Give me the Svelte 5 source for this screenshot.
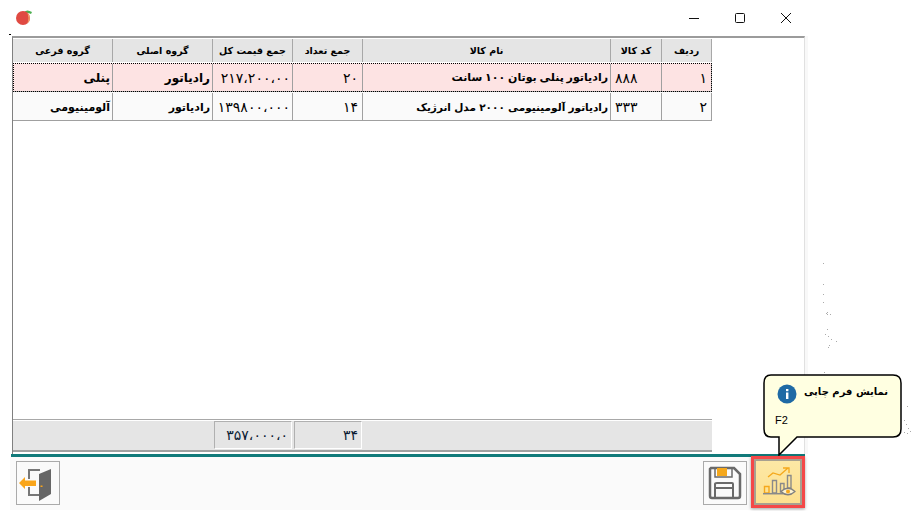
<script>
	const rows = [
		{ no: '۱', code: '۸۸۸', name: 'رادیاتور پنلی بوتان ۱۰۰ سانت', qty: '۲۰', total: '۲۱۷،۲۰۰،۰۰', main: 'رادیاتور', sub: 'پنلی', active: true },
		{ no: '۲', code: '۳۳۳', name: 'رادیاتور آلومینیومی ۲۰۰۰ مدل انرژیک', qty: '۱۴', total: '۱۳۹۸۰۰،۰۰۰', main: 'رادیاتور', sub: 'آلومینیومی', active: false }
	];
	const specks = [
		[823, 263], [823, 284], [823, 294], [823, 302], [826, 313], [827, 312], [827, 314], [830, 314],
		[827, 329], [825, 334], [828, 336], [831, 339], [836, 341], [829, 345], [828, 347], [824, 372],
		[907, 406], [904, 420], [906, 424], [908, 428], [904, 432], [907, 433], [910, 431]
	];
</script>

<div class="window">
	<div class="titlebar">
		<svg class="app-icon" width="16" height="16" viewBox="0 0 16 16">
			<path d="M8 3 Q11 0 16 3 L15 5 Q11 3 9 5 Z" fill="#4caf50" />
			<circle cx="7" cy="9" r="7" fill="#e04a42" />
			<path d="M11 3.5 A7 7 0 0 1 11 14.7 Q14 9 11 3.5 Z" fill="#f4a868" />
		</svg>
		<div class="win-btns">
			<svg width="12" height="12" viewBox="0 0 12 12"><path d="M1 6.5 H11" stroke="#111" fill="none" /></svg>
			<svg width="12" height="12" viewBox="0 0 12 12"><rect x="1.5" y="1.5" width="9" height="9" rx="1" stroke="#111" fill="none" /></svg>
			<svg width="12" height="12" viewBox="0 0 12 12"><path d="M1 1 L11 11 M11 1 L1 11" stroke="#111" fill="none" /></svg>
		</div>
	</div>

	<div class="frame">
		<div class="grid head">
			<div>گروه فرعی</div>
			<div>گروه اصلی</div>
			<div>جمع قیمت کل</div>
			<div>جمع تعداد</div>
			<div>نام کالا</div>
			<div>کد کالا</div>
			<div>ردیف</div>
		</div>
		{#each rows as row}
			<div class="grid row" class:active={row.active}>
				<div>{row.sub}</div>
				<div>{row.main}</div>
				<div class="num total">{row.total}</div>
				<div class="num qty">{row.qty}</div>
				<div class="name">{row.name}</div>
				<div class="num code">{row.code}</div>
				<div class="num idx">{row.no}</div>
			</div>
		{/each}
		<div class="spacer"></div>
		<div class="totals">
			<div class="sum first">۳۵۷،۰۰۰،۰</div>
			<div class="sum second">۳۴</div>
		</div>
	</div>

	<div class="teal"></div>

	<div class="toolbar">
		<button class="tool" aria-label="exit">
			<svg width="42" height="42" viewBox="0 0 42 42">
				<path d="M23 8 H12 V17 M12 25 V33 H22" stroke="#777" stroke-width="2" fill="none" />
				<path d="M34 7 L22 12 V39 L34 32 Z" fill="#666" />
				<path d="M19 18.5 H8 V15 L2 21 L8 27 V24 H19 Z" fill="#f9a51a" />
				<rect x="23.5" y="23.5" width="2" height="1.5" fill="#f9a51a" />
			</svg>
		</button>
		<div class="right-tools">
			<button class="tool" aria-label="save">
				<svg width="36" height="36" viewBox="0 0 36 36">
					<path d="M4 3 H27 L33 9 V31 Q33 33 31 33 H5 Q3 33 3 31 V4 Z" stroke="#6a6a6a" stroke-width="2.5" fill="none" />
					<rect x="10" y="3" width="10" height="8" fill="#f5a81c" />
					<path d="M8 3 V12 H25 V3" stroke="#6a6a6a" stroke-width="1.5" fill="none" />
					<path d="M8 32 V19 Q8 18 10 18 H25 Q26 18 26 19 V32 M8 23 H26" stroke="#6a6a6a" stroke-width="2" fill="none" />
				</svg>
			</button>
			<button class="tool hot" aria-label="print form">
				<svg width="36" height="36" viewBox="0 0 36 36">
					<path d="M8 13 L13 9 L20 11 L28 4 M23 4 H29 V9" stroke="#f5a81c" stroke-width="1.3" fill="none" />
					<path d="M4.5 22.5 H9 V29 H4.5 Z" stroke="#f5a81c" stroke-width="1.4" fill="none" />
					<path d="M12.5 16.5 H16.5 V29 H12.5 Z M20.5 19.5 H24 V28 H20.5 Z M27.5 11.5 H31 V24 H27.5 Z" stroke="#8a8a8a" stroke-width="1.4" fill="none" />
					<path d="M3 29.7 H25" stroke="#8a8a8a" stroke-width="1.5" />
					<path d="M21 27.5 Q28 21 35 27.5 Q28 34 21 27.5 Z" fill="#fdf3d0" stroke="#808080" stroke-width="1.2" />
					<circle cx="28" cy="27.5" r="2" fill="#f5a81c" />
				</svg>
			</button>
		</div>
	</div>

	<svg class="specks" width="911" height="511" viewBox="0 0 911 511">
		{#each specks as [x, y]}
			<rect {x} {y} width="1" height="1" fill="#aaa" />
		{/each}
	</svg>

	<div class="dot"></div>

	<div class="tip">
		<svg class="bubble" width="140" height="82" viewBox="0 0 140 82">
			<path
				d="M8 1 H130 Q138 1 138 9 V55 Q138 63 130 63 H34 L16 81 V63 H8 Q1 63 1 55 V9 Q1 1 8 1 Z"
				fill="#ffffe1"
				stroke="#000"
				stroke-width="1.5"
			/>
		</svg>
		<div class="tip-title">نمایش فرم چاپی</div>
		<svg class="info" width="20" height="20" viewBox="0 0 20 20">
			<circle cx="10" cy="10" r="9.5" fill="#1f6aa5" />
			<rect x="9" y="8.5" width="2.4" height="6.5" fill="#fff" />
			<rect x="9" y="5" width="2.4" height="2.2" fill="#fff" />
		</svg>
		<div class="tip-key">F2</div>
	</div>
</div>

<style>
	:global(body) {
		margin: 0;
		background: #fff;
	}

	.window {
		position: relative;
		width: 911px;
		height: 511px;
		overflow: hidden;
		display: flex;
		flex-direction: column;
		background: #fff;
		font-family: 'DejaVu Sans', 'Liberation Sans', sans-serif;
		color: #000;
	}

	.titlebar {
		height: 36px;
		flex: none;
		display: flex;
		align-items: flex-start;
		justify-content: space-between;
		padding: 9px 119px 0 16px;
		box-sizing: border-box;
	}

	.app-icon {
		display: block;
	}

	.win-btns {
		display: flex;
		gap: 34px;
		margin-top: 3px;
	}

	.frame {
		flex: none;
		width: 793px;
		height: 417.5px;
		margin-left: 12px;
		box-sizing: border-box;
		border-top: 2px solid #9b9b9b;
		border-left: 1px solid #808080;
		border-right: 1px solid #e0e0e0;
		box-shadow: 3px 0 0 #f8f8f8;
		display: flex;
		flex-direction: column;
	}

	.grid {
		width: 699px;
		display: grid;
		grid-template-columns: 100px 100px 80px 70px 248px 51px 50px;
		direction: ltr;
		box-sizing: border-box;
	}

	.grid > div {
		direction: rtl;
		box-sizing: border-box;
		overflow: hidden;
		white-space: nowrap;
	}

	.head {
		height: 25px;
		background: #e5e5e5;
		border-top: 1px solid #fff;
		border-bottom: 1px solid #fff;
	}

	.head > div {
		border-right: 1px solid #a8a8a8;
		display: flex;
		align-items: center;
		justify-content: center;
		font-size: 9.5px;
		font-weight: 700;
	}

	.row {
		height: 29px;
		padding-top: 1px;
		background: #fafafa;
		border-bottom: 1px solid #a0a0a0;
	}

	.row > div {
		border-right: 1px solid #a0a0a0;
		display: flex;
		align-items: center;
		justify-content: flex-start;
		padding-right: 2px;
		font-size: 11px;
		font-weight: 700;
	}

	.row:not(.active) > div {
		padding-top: 1px;
	}

	.row.active {
		background: #fde3e3;
		outline: 1px dotted #000;
		outline-offset: -1px;
	}

	.row.active > div {
		font-size: 12px;
	}

	.row .name {
		font-size: 10.5px;
		word-spacing: -0.4px;
	}

	.row.active .name {
		font-size: 11px;
		word-spacing: -1px;
	}

	.row .num {
		font-weight: 400;
		font-size: 14px;
	}

	.row.active .num {
		font-size: 14px;
	}

	.row .total {
		letter-spacing: 0.3px;
	}

	.row.active .total {
		letter-spacing: 1px;
	}

	.row .qty {
		padding-right: 4px;
		letter-spacing: 1px;
	}

	.row .code {
		padding-right: 0;
		padding-left: 4px;
		justify-content: flex-end;
		letter-spacing: 1px;
	}

	.row .idx {
		padding-right: 4px;
	}

	.spacer {
		flex: 1;
	}

	.totals {
		width: 699px;
		height: 33px;
		flex: none;
		margin-bottom: 1.5px;
		box-sizing: border-box;
		background: #e5e5e5;
		border-top: 1px solid #a8a8a8;
		border-bottom: 2px solid #a0a0a0;
		box-shadow: inset 0 1px 0 #fff;
		display: flex;
		padding: 1px 0 1px 201px;
		gap: 2px;
	}

	.sum {
		box-sizing: border-box;
		height: 100%;
		border: 1px solid #fff;
		border-left-color: #b0b0b0;
		border-top-color: #b0b0b0;
		font-size: 14px;
		letter-spacing: 1px;
		direction: rtl;
		display: flex;
		align-items: center;
		padding-right: 3px;
		color: #0b1c33;
	}

	.first {
		width: 78px;
	}

	.second {
		width: 68px;
	}

	.teal {
		flex: none;
		height: 3.5px;
		width: 794px;
		margin-left: 11px;
		background: #117a7a;
	}

	.toolbar {
		flex: none;
		height: 53px;
		width: 795px;
		margin-left: 10px;
		box-sizing: border-box;
		background: #fafafa;
		display: flex;
		align-items: flex-start;
		justify-content: space-between;
		padding: 4px 0 0 6px;
	}

	.right-tools {
		display: flex;
		align-items: flex-start;
		gap: 4px;
	}

	.tool {
		width: 44px;
		height: 44px;
		padding: 0;
		box-sizing: border-box;
		border: 1px solid #aaa;
		background: #fafafa;
		display: flex;
		align-items: center;
		justify-content: center;
	}

	.tool.hot {
		width: 54px;
		height: 52px;
		margin-top: -5px;
		border: 3px solid #f44848;
		outline: 2px solid #a8a090;
		outline-offset: -5px;
		background: linear-gradient(#fde8a6, #fde08e);
		box-shadow: 0 1px 3px rgba(0, 0, 0, 0.35);
	}

	.specks {
		position: absolute;
		inset: 0;
		pointer-events: none;
	}

	.dot {
		position: absolute;
		left: 9px;
		top: 34px;
		width: 2px;
		height: 1px;
		background: #000;
	}

	.tip {
		position: absolute;
		left: 763px;
		top: 374px;
		width: 140px;
		height: 82px;
	}

	.bubble {
		position: absolute;
		inset: 0;
	}

	.tip-title {
		position: absolute;
		right: 15px;
		top: 12px;
		direction: rtl;
		font-size: 10px;
		font-weight: 700;
		white-space: nowrap;
	}

	.info {
		position: absolute;
		left: 14px;
		top: 10px;
	}

	.tip-key {
		position: absolute;
		left: 12px;
		top: 40px;
		font-family: 'Liberation Sans', sans-serif;
		font-size: 11px;
	}
</style>
